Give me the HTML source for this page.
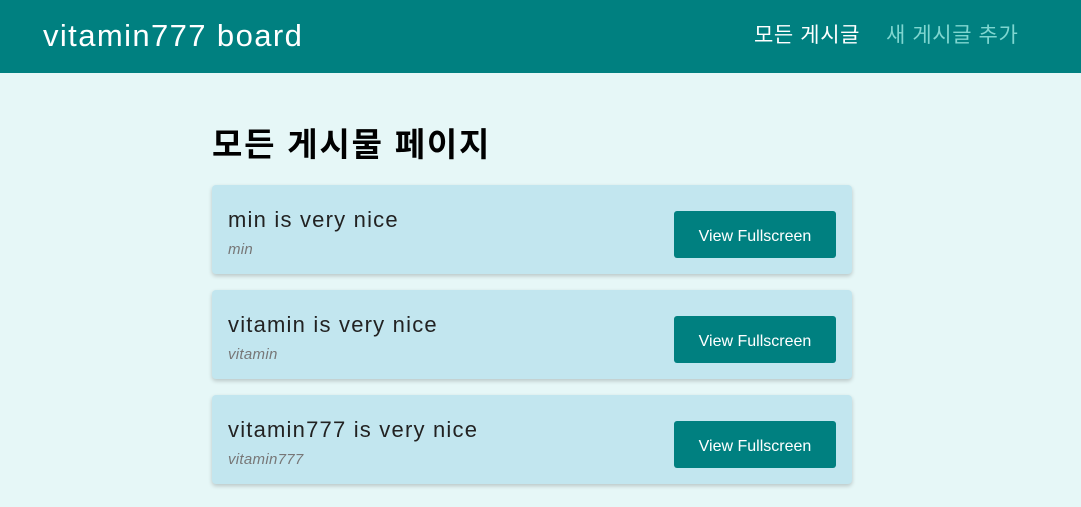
<!DOCTYPE html>
<html><head><meta charset="utf-8"><style>
*{margin:0;padding:0;box-sizing:border-box}
body{width:1081px;height:507px;overflow:hidden;background:#e6f7f7;font-family:"Liberation Sans","Noto Sans CJK KR",sans-serif}
.hd{height:73px;background:#008080;position:relative}
.logo{position:absolute;left:43px;top:18px;font-size:31px;color:#fff;letter-spacing:1.4px}
.nav{position:absolute;top:19px;font-size:21px;letter-spacing:0.6px}
h1{position:absolute;left:212px;top:118px;font-size:33px;letter-spacing:1.8px;font-weight:bold;color:#000}
.card{position:absolute;left:212px;width:640px;height:89px;background:#c2e6ef;border-radius:4px;box-shadow:0 2px 4px rgba(0,0,0,0.2)}
.t{position:absolute;left:16px;top:22px;font-size:22px;color:#222;letter-spacing:1.2px}
.a{position:absolute;left:16px;top:56px;font-size:15px;font-style:italic;color:#777;letter-spacing:0.3px}
.b{position:absolute;left:462px;top:26px;width:162px;height:47px;background:#008080;border-radius:3px;color:#fff;font-size:16px;text-align:center;line-height:51px}
</style></head><body>
<div class="hd"><div class="logo">vitamin777 board</div>
<div class="nav" style="left:754px;color:#fff">모든 게시글</div>
<div class="nav" style="left:886px;color:#7fd6d0">새 게시글 추가</div></div>
<h1>모든 게시물 페이지</h1>
<div class="card" style="top:185px"><div class="t">min is very nice</div><div class="a">min</div><div class="b">View Fullscreen</div></div>
<div class="card" style="top:290px"><div class="t">vitamin is very nice</div><div class="a">vitamin</div><div class="b">View Fullscreen</div></div>
<div class="card" style="top:395px"><div class="t">vitamin777 is very nice</div><div class="a">vitamin777</div><div class="b">View Fullscreen</div></div>
</body></html>
